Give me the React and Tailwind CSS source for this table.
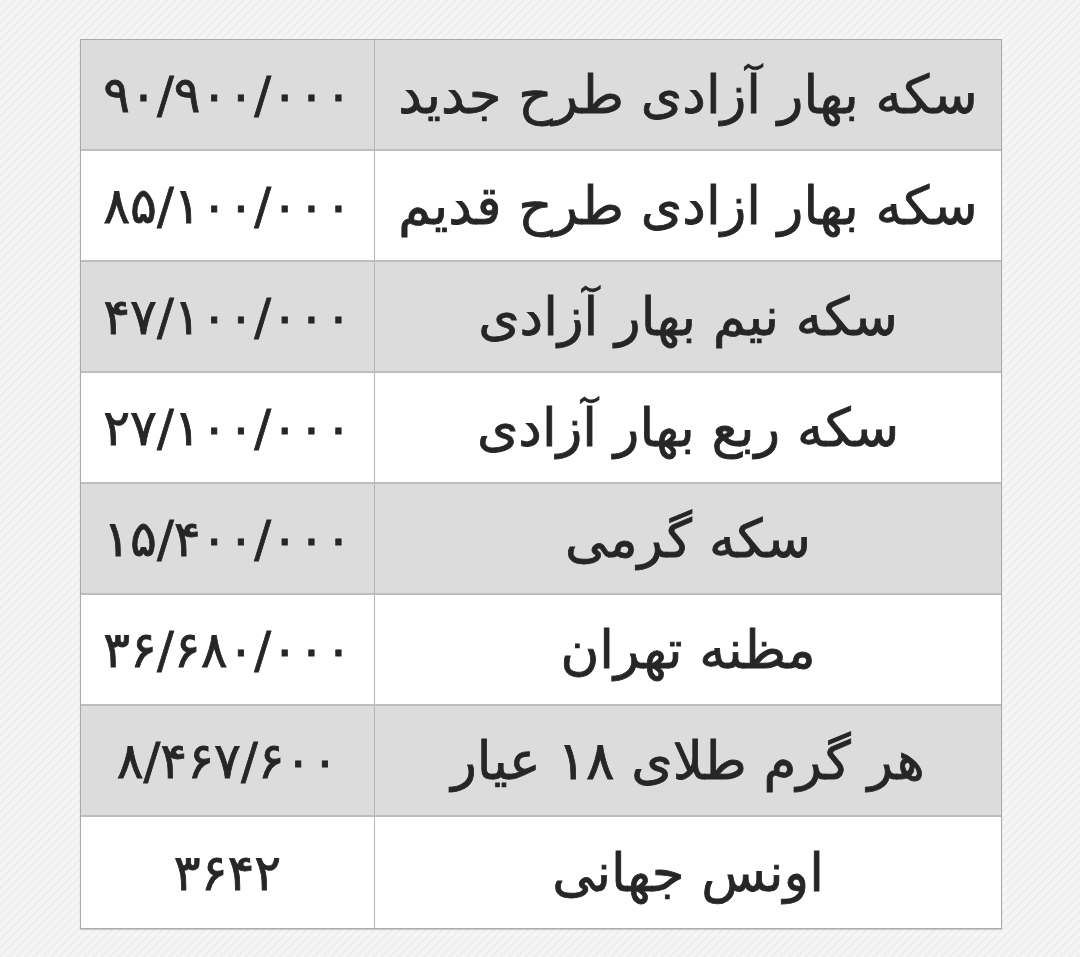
const rows = [
  { name: 'سکه بهار آزادی طرح جدید', price: '۹۰/۹۰۰/۰۰۰' },
  { name: 'سکه بهار ازادی طرح قدیم', price: '۸۵/۱۰۰/۰۰۰' },
  { name: 'سکه نیم بهار آزادی', price: '۴۷/۱۰۰/۰۰۰' },
  { name: 'سکه ربع بهار آزادی', price: '۲۷/۱۰۰/۰۰۰' },
  { name: 'سکه گرمی', price: '۱۵/۴۰۰/۰۰۰' },
  { name: 'مظنه تهران', price: '۳۶/۶۸۰/۰۰۰' },
  { name: 'هر گرم طلای ۱۸ عیار', price: '۸/۴۶۷/۶۰۰' },
  { name: 'اونس جهانی', price: '۳۶۴۲' },
]

export default function App() {
  return (
    <div className="w-[1080px] h-[957px] bg-[#f1f1f1] bg-[repeating-linear-gradient(135deg,#f5f5f5_0px,#f5f5f5_3px,#ebebeb_4px,#f5f5f5_6px)] pt-[39px] pl-[80px] font-['DejaVu_Sans',sans-serif] text-[#262626] [-webkit-text-stroke:0.8px_#262626]">
      <div dir="rtl" className="w-[922px] border border-[#a9a9a9] shadow-[0_1px_1px_rgba(0,0,0,0.15)]">
        {rows.map((r, i) => (
          <div
            key={r.name}
            className={`flex h-[111px] ${i % 2 === 0 ? 'bg-[#dcdcdc]' : 'bg-white'} ${
              i !== rows.length - 1 ? 'border-b-2 border-[#bdbdbd]' : ''
            }`}
          >
            <div className="w-[627px] flex items-center justify-center border-l border-[#b5b5b5] text-[53px] leading-none">
              {r.name}
            </div>
            <div dir="ltr" className="flex-1 flex items-center justify-center text-[50px] leading-none">
              {r.price}
            </div>
          </div>
        ))}
      </div>
    </div>
  )
}
